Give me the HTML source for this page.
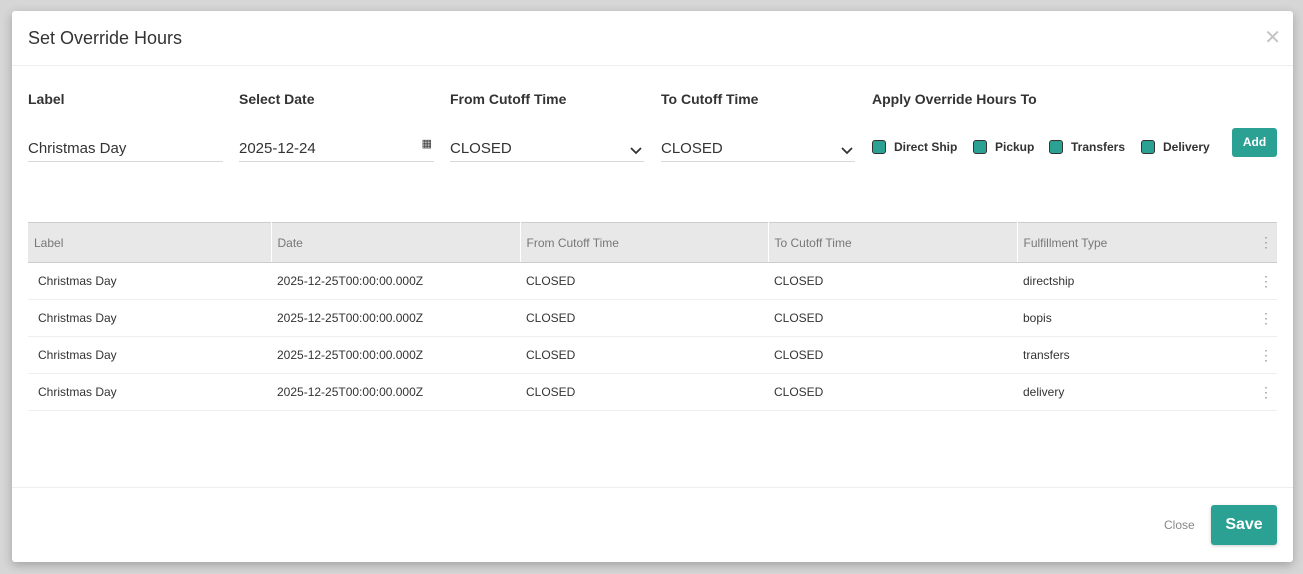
<!DOCTYPE html>
<html><head><style>
*{box-sizing:border-box;margin:0;padding:0}
body{width:1303px;height:574px;background:#d6d6d6;font-family:"Liberation Sans",sans-serif;position:relative;overflow:hidden}
.m{position:absolute;left:12px;top:11px;width:1281px;height:551px;background:#fff;border-radius:3px;box-shadow:0 3px 10px rgba(0,0,0,.25)}
.a{position:absolute}
.t{left:16px;top:17px;font-size:18px;color:#333}
.x{right:12px;top:14px;font-size:20px;color:#c4c4c4}
.hl{left:0;right:0;height:1px;background:#eee}
.lab{font-size:14px;font-weight:bold;color:#333;top:80px}
.inp{top:126px;padding-top:3px;height:25px;border-bottom:1px solid #d8d8d8;font-size:15px;color:#333;width:195px}
.cb{top:129px;font-size:12px;font-weight:bold;color:#333;display:flex;align-items:center}
.cb i{display:inline-block;width:14px;height:14px;background:#2ba193;border:1.5px solid #333;border-radius:3px;margin-right:8px}
.btn{background:#2ba193;color:#fff;font-weight:bold;border-radius:3px;text-align:center}
table{position:absolute;left:16px;top:211px;width:1249px;border-collapse:collapse;font-size:12px;color:#333}
th{background:#e8e8e8;height:40px;font-weight:normal;color:#777;text-align:left;padding-left:6px;border-top:1px solid #ccc;border-bottom:1px solid #ccc;border-right:1px solid #fff}
td{height:37px;border-bottom:1px solid #eee;padding-left:10px}
.d{color:#999;text-align:center;font-size:14px;padding-left:0}
</style></head><body>
<div class="m">
<div class="a t">Set Override Hours</div>
<div class="a x">✕</div>
<div class="a hl" style="top:54px"></div>
<div class="a lab" style="left:16px">Label</div>
<div class="a lab" style="left:227px">Select Date</div>
<div class="a lab" style="left:438px">From Cutoff Time</div>
<div class="a lab" style="left:649px">To Cutoff Time</div>
<div class="a lab" style="left:860px">Apply Override Hours To</div>
<div class="a inp" style="left:16px">Christmas Day</div>
<div class="a inp" style="left:227px">2025-12-24<span style="position:absolute;right:2px;top:0;font-size:11px">▦</span></div>
<div class="a inp" style="left:438px;width:194px">CLOSED<svg style="position:absolute;right:2px;top:10px" width="12" height="8"><path d="M1 1l5 5 5-5" stroke="#333" stroke-width="1.8" fill="none"/></svg></div>
<div class="a inp" style="left:649px;width:194px">CLOSED<svg style="position:absolute;right:2px;top:10px" width="12" height="8"><path d="M1 1l5 5 5-5" stroke="#333" stroke-width="1.8" fill="none"/></svg></div>
<div class="a cb" style="left:860px"><i></i>Direct Ship</div>
<div class="a cb" style="left:961px"><i></i>Pickup</div>
<div class="a cb" style="left:1037px"><i></i>Transfers</div>
<div class="a cb" style="left:1129px"><i></i>Delivery</div>
<div class="a btn" style="left:1220px;top:117px;width:45px;height:29px;line-height:29px;font-size:12px">Add</div>
<table>
<tr><th style="width:243px">Label</th><th style="width:249px">Date</th><th style="width:248px">From Cutoff Time</th><th style="width:249px">To Cutoff Time</th><th style="border-right:0">Fulfillment Type</th><th class="d" style="width:22px;border-right:0">⋮</th></tr>
<tr><td>Christmas Day</td><td style="padding-left:6px">2025-12-25T00:00:00.000Z</td><td style="padding-left:6px">CLOSED</td><td style="padding-left:6px">CLOSED</td><td style="padding-left:6px">directship</td><td class="d">⋮</td></tr>
<tr><td>Christmas Day</td><td style="padding-left:6px">2025-12-25T00:00:00.000Z</td><td style="padding-left:6px">CLOSED</td><td style="padding-left:6px">CLOSED</td><td style="padding-left:6px">bopis</td><td class="d">⋮</td></tr>
<tr><td>Christmas Day</td><td style="padding-left:6px">2025-12-25T00:00:00.000Z</td><td style="padding-left:6px">CLOSED</td><td style="padding-left:6px">CLOSED</td><td style="padding-left:6px">transfers</td><td class="d">⋮</td></tr>
<tr><td>Christmas Day</td><td style="padding-left:6px">2025-12-25T00:00:00.000Z</td><td style="padding-left:6px">CLOSED</td><td style="padding-left:6px">CLOSED</td><td style="padding-left:6px">delivery</td><td class="d">⋮</td></tr>
</table>
<div class="a hl" style="top:476px"></div>
<div class="a" style="left:1152px;top:507px;font-size:12px;color:#888">Close</div>
<div class="a btn" style="left:1199px;top:494px;width:66px;height:40px;line-height:40px;font-size:16px;box-shadow:0 1px 3px rgba(0,0,0,.2)">Save</div>
</div>
</body></html>
